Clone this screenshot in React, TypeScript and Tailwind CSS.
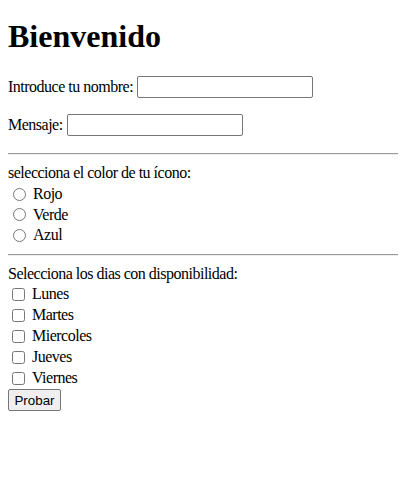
export default function App() {
  const colores = ["Rojo", "Verde", "Azul"];
  const dias = ["Lunes", "Martes", "Miercoles", "Jueves", "Viernes"];

  return (
    <div className="px-2 pt-[18px] font-['Liberation_Serif',serif] text-[16px] text-black bg-white min-h-[478px]">
      <h1 className="h-[37px] text-[32px] font-bold leading-[37px]">Bienvenido</h1>
      <form onSubmit={(e) => e.preventDefault()} className="flex flex-col items-start tracking-[-0.5px]">
        {/* campos de texto */}
        <div className="mt-[21px] flex h-[22px] items-center gap-[4px]">
          <span className="leading-[18px]">Introduce tu nombre:</span>
          <input
            type="text"
            name="nombre"
            className="w-[176px] h-[22px] border border-[#767676] rounded-[2px] px-[3px] bg-white font-['Liberation_Sans',sans-serif] text-[13.33px]"
          />
        </div>
        <div className="mt-[16px] flex h-[22px] items-center gap-[4px]">
          <span className="leading-[18px]">Mensaje:</span>
          <input
            type="text"
            name="mensaje"
            className="w-[176px] h-[22px] border border-[#767676] rounded-[2px] px-[3px] bg-white font-['Liberation_Sans',sans-serif] text-[13.33px]"
          />
        </div>
        <hr className="mt-[17px] mb-[9px] w-full h-0 border-t border-t-[#9a9a9a] border-b border-b-[#eeeeee]" />

        {/* color del icono */}
        <div className="h-[18px] leading-[18px]">selecciona el color de tu ícono:</div>
        <div className="mt-[2px] flex flex-col">
          {colores.map((c) => (
            <label key={c} className="flex h-[20.5px] items-center">
              <input type="radio" name="color" value={c} className="ml-[5px] mr-[7px] size-[13px]" />
              <span className="leading-[18px]">{c}</span>
            </label>
          ))}
        </div>
        <hr className="mt-[8px] mb-[9px] w-full h-0 border-t border-t-[#9a9a9a] border-b border-b-[#eeeeee]" />

        {/* dias */}
        <div className="h-[18px] leading-[18px]">Selecciona los dias con disponibilidad:</div>
        <div className="mt-[1px] flex flex-col">
          {dias.map((d) => (
            <label key={d} className="flex h-[21px] items-center">
              <input type="checkbox" name="dias" value={d} className="ml-[4px] mr-[7px] size-[13px]" />
              <span className="leading-[18px]">{d}</span>
            </label>
          ))}
        </div>
        <button
          type="submit"
          className="mt-[0.5px] w-[53px] h-[22px] border border-[#767676] rounded-[2px] bg-[#efefef] font-['Liberation_Sans',sans-serif] text-[13.33px] leading-[normal] tracking-normal text-black"
        >
          Probar
        </button>
      </form>
    </div>
  );
}
